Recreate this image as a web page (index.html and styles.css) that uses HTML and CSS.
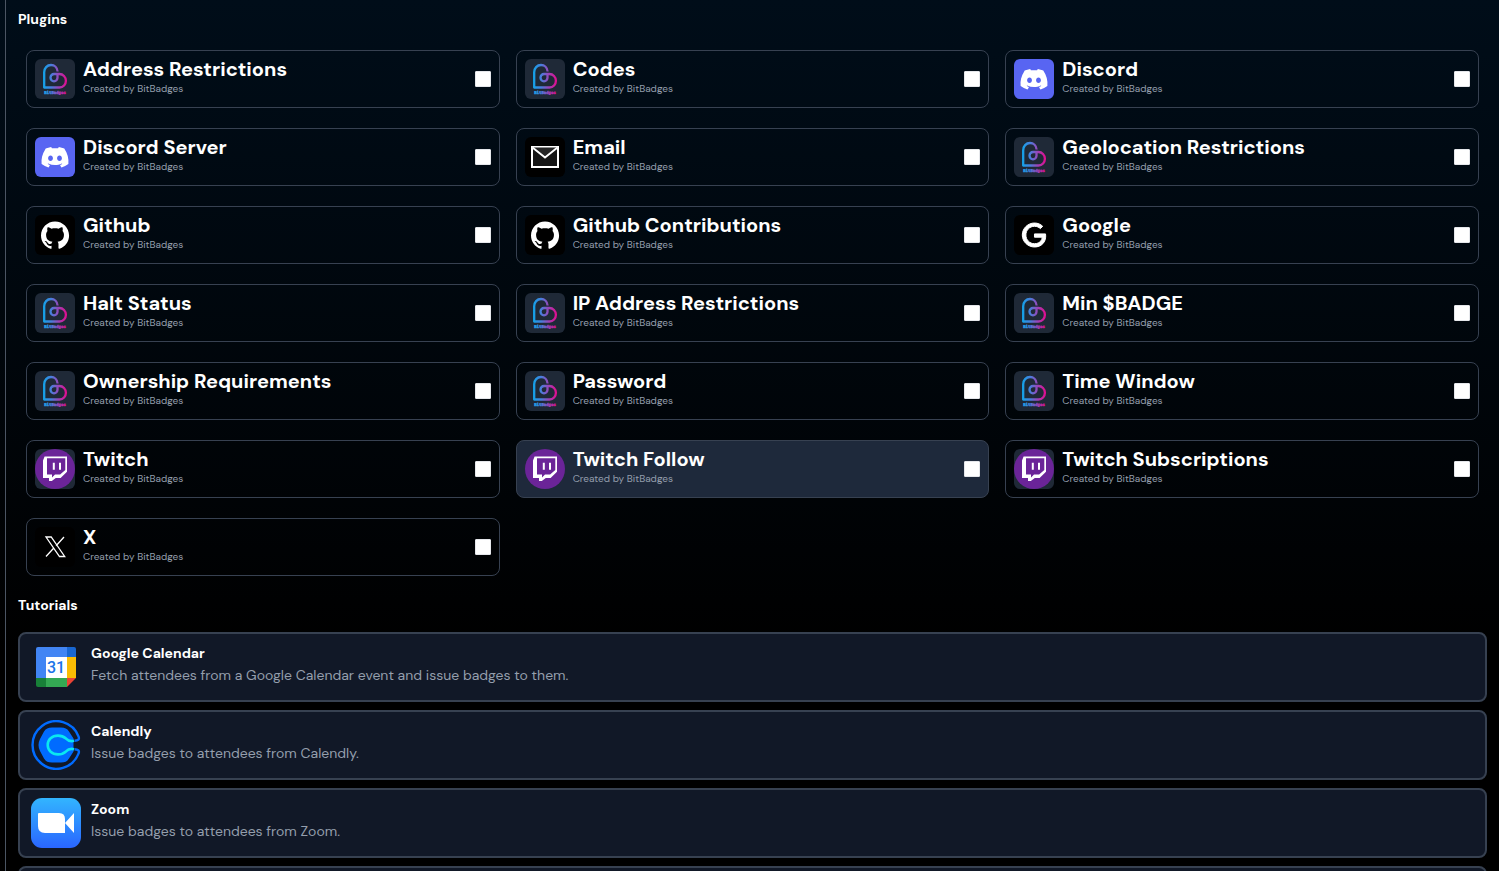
FILE: index.html
```html
<!DOCTYPE html>
<html lang="en">
<head>
<meta charset="utf-8">
<title>Plugins</title>
<link rel="stylesheet" href="styles.css">
</head>
<body>
<svg class="defs" aria-hidden="true">
  <defs>
    <linearGradient id="bb" gradientUnits="userSpaceOnUse" x1="8" y1="0" x2="32" y2="0">
      <stop offset="0" stop-color="#10a5ea"/><stop offset=".35" stop-color="#4a7ddb"/><stop offset=".65" stop-color="#9a44b8"/><stop offset="1" stop-color="#e6098d"/>
    </linearGradient>
    <linearGradient id="zoom-bg" x1="0" y1="0" x2="0" y2="1">
      <stop offset="0" stop-color="#32b5ff"/><stop offset="1" stop-color="#2a66ff"/>
    </linearGradient>
    <symbol id="bitbadges" viewBox="0 0 40 40">
      <path d="M22.600 12.500C22.300 8.700 19.600 6 16 6c-3.900 0-6.800 3.200-6.800 7.200v15.300h15.300c3.700 0 6.400-3.100 6.400-6.800s-2.900-6.700-6.400-6.700h-5.500c-2 0-3.500 1.700-3.500 3.700s1.500 3.600 3.500 3.600 3.500-1.600 3.500-3.600V15" fill="none" stroke="url(#bb)" stroke-width="2.300" stroke-linejoin="round"/>
      <text x="20" y="34.500" text-anchor="middle" class="bb-word" fill="url(#bb)" stroke="url(#bb)" stroke-width=".4">BitBadges</text>
    </symbol>
    <symbol id="discord" viewBox="0 0 40 40">
      <g transform="translate(6.500 6.700) scale(1.125)"><path fill="#fff" d="M20.317 4.370a19.791 19.791 0 0 0-4.885-1.515.074.074 0 0 0-.079.037c-.21.375-.444.864-.608 1.250a18.270 18.270 0 0 0-5.487 0 12.640 12.640 0 0 0-.617-1.250.077.077 0 0 0-.079-.037A19.736 19.736 0 0 0 3.677 4.370a.07.07 0 0 0-.032.027C.533 9.046-.32 13.580.099 18.057a.082.082 0 0 0 .031.057 19.900 19.900 0 0 0 5.993 3.030.078.078 0 0 0 .084-.028 14.090 14.090 0 0 0 1.226-1.994.076.076 0 0 0-.041-.106 13.107 13.107 0 0 1-1.872-.892.077.077 0 0 1-.008-.128 10.200 10.200 0 0 0 .372-.292.074.074 0 0 1 .077-.01c3.928 1.793 8.180 1.793 12.062 0a.074.074 0 0 1 .078.010c.12.098.246.198.373.292a.077.077 0 0 1-.006.127 12.299 12.299 0 0 1-1.873.892.077.077 0 0 0-.041.107c.36.698.772 1.362 1.225 1.993a.076.076 0 0 0 .084.028 19.839 19.839 0 0 0 6.002-3.030.077.077 0 0 0 .032-.054c.5-5.177-.838-9.674-3.549-13.660a.061.061 0 0 0-.031-.030zM8.020 15.330c-1.183 0-2.157-1.085-2.157-2.419 0-1.333.956-2.419 2.157-2.419 1.210 0 2.176 1.096 2.157 2.420 0 1.333-.956 2.418-2.157 2.418zm7.975 0c-1.183 0-2.157-1.085-2.157-2.419 0-1.333.955-2.419 2.157-2.419 1.210 0 2.176 1.096 2.157 2.420 0 1.333-.946 2.418-2.157 2.418z"/></g>
    </symbol>
    <symbol id="email" viewBox="0 0 40 40">
      <rect x="7" y="10" width="26" height="20" fill="#151515" stroke="#fff" stroke-width="2"/>
      <path d="M7.500 10.500 20 20.500 32.500 10.500" fill="#252525" stroke="#fff" stroke-width="2"/>
    </symbol>
    <symbol id="github" viewBox="0 0 40 40">
      <g transform="translate(6 6.100) scale(1.170)"><path fill="#fff" d="M12 .297c-6.630 0-12 5.373-12 12 0 5.303 3.438 9.800 8.205 11.385.6.113.82-.258.82-.577 0-.285-.01-1.040-.015-2.040-3.338.724-4.042-1.610-4.042-1.610C4.422 18.070 3.633 17.700 3.633 17.700c-1.087-.744.084-.729.084-.729 1.205.084 1.838 1.236 1.838 1.236 1.070 1.835 2.809 1.305 3.495.998.108-.776.417-1.305.76-1.605-2.665-.3-5.466-1.332-5.466-5.930 0-1.310.465-2.380 1.235-3.220-.135-.303-.54-1.523.105-3.176 0 0 1.005-.322 3.300 1.230.96-.267 1.980-.399 3-.405 1.020.006 2.040.138 3 .405 2.280-1.552 3.285-1.230 3.285-1.230.645 1.653.24 2.873.12 3.176.765.840 1.230 1.910 1.230 3.220 0 4.610-2.805 5.625-5.475 5.920.42.360.81 1.096.81 2.220 0 1.606-.015 2.896-.015 3.286 0 .315.210.69.825.57C20.565 22.092 24 17.592 24 12.297c0-6.627-5.373-12-12-12"/></g>
    </symbol>
    <symbol id="google" viewBox="0 0 40 40">
      <g transform="translate(8 8)"><path fill="#fff" d="M12.480 10.920v3.280h7.840c-.24 1.840-.853 3.187-1.787 4.133-1.147 1.147-2.933 2.400-6.053 2.400-4.827 0-8.600-3.893-8.600-8.720s3.773-8.720 8.600-8.720c2.600 0 4.507 1.027 5.907 2.347l2.307-2.307C18.747 1.440 16.133 0 12.480 0 5.867 0 .307 5.387.307 12s5.560 12 12.173 12c3.573 0 6.267-1.173 8.373-3.360 2.160-2.160 2.840-5.213 2.840-7.667 0-.76-.053-1.467-.173-2.053H12.480z" stroke="#fff" stroke-width="1"/></g>
    </symbol>
    <symbol id="twitch" viewBox="0 0 40 40">
      <circle cx="20" cy="20" r="20" fill="#6b2498"/>
      <path fill="#fff" fill-rule="evenodd" d="M9.600 7.500H32v15.200l-6.400 6.300h-4.800L16.800 32H14v-3H8V11.500zM12 9.300v16.200h5v3l3-3h5.100l5.200-4.600V9.300zM17.800 13.800h2v6.900h-2zM24 13.800h2v6.900h-2z"/>
    </symbol>
    <symbol id="x" viewBox="0 0 40 40">
      <path d="M11 10h5.200l13.500 19.500h-5.200zM29 10l-7.900 8.800M18.800 21 11 29.500" fill="none" stroke="#fff" stroke-width="1.300"/>
    </symbol>
  </defs>
</svg>
<main class="panel">
  <h2 class="heading">Plugins</h2>
  <div class="plugins">
    <label class="plugin"><svg class="logo"><use href="#bitbadges"/></svg><span class="info"><span class="name">Address Restrictions</span><span class="by">Created by BitBadges</span></span><input class="check" type="checkbox"></label>
    <label class="plugin"><svg class="logo"><use href="#bitbadges"/></svg><span class="info"><span class="name">Codes</span><span class="by">Created by BitBadges</span></span><input class="check" type="checkbox"></label>
    <label class="plugin"><svg class="logo blurple"><use href="#discord"/></svg><span class="info"><span class="name">Discord</span><span class="by">Created by BitBadges</span></span><input class="check" type="checkbox"></label>
    <label class="plugin"><svg class="logo blurple"><use href="#discord"/></svg><span class="info"><span class="name">Discord Server</span><span class="by">Created by BitBadges</span></span><input class="check" type="checkbox"></label>
    <label class="plugin"><svg class="logo black"><use href="#email"/></svg><span class="info"><span class="name">Email</span><span class="by">Created by BitBadges</span></span><input class="check" type="checkbox"></label>
    <label class="plugin"><svg class="logo"><use href="#bitbadges"/></svg><span class="info"><span class="name">Geolocation Restrictions</span><span class="by">Created by BitBadges</span></span><input class="check" type="checkbox"></label>
    <label class="plugin"><svg class="logo black"><use href="#github"/></svg><span class="info"><span class="name">Github</span><span class="by">Created by BitBadges</span></span><input class="check" type="checkbox"></label>
    <label class="plugin"><svg class="logo black"><use href="#github"/></svg><span class="info"><span class="name">Github Contributions</span><span class="by">Created by BitBadges</span></span><input class="check" type="checkbox"></label>
    <label class="plugin"><svg class="logo black"><use href="#google"/></svg><span class="info"><span class="name">Google</span><span class="by">Created by BitBadges</span></span><input class="check" type="checkbox"></label>
    <label class="plugin"><svg class="logo"><use href="#bitbadges"/></svg><span class="info"><span class="name">Halt Status</span><span class="by">Created by BitBadges</span></span><input class="check" type="checkbox"></label>
    <label class="plugin"><svg class="logo"><use href="#bitbadges"/></svg><span class="info"><span class="name">IP Address Restrictions</span><span class="by">Created by BitBadges</span></span><input class="check" type="checkbox"></label>
    <label class="plugin"><svg class="logo"><use href="#bitbadges"/></svg><span class="info"><span class="name">Min $BADGE</span><span class="by">Created by BitBadges</span></span><input class="check" type="checkbox"></label>
    <label class="plugin"><svg class="logo"><use href="#bitbadges"/></svg><span class="info"><span class="name">Ownership Requirements</span><span class="by">Created by BitBadges</span></span><input class="check" type="checkbox"></label>
    <label class="plugin"><svg class="logo"><use href="#bitbadges"/></svg><span class="info"><span class="name">Password</span><span class="by">Created by BitBadges</span></span><input class="check" type="checkbox"></label>
    <label class="plugin"><svg class="logo"><use href="#bitbadges"/></svg><span class="info"><span class="name">Time Window</span><span class="by">Created by BitBadges</span></span><input class="check" type="checkbox"></label>
    <label class="plugin"><svg class="logo"><use href="#twitch"/></svg><span class="info"><span class="name">Twitch</span><span class="by">Created by BitBadges</span></span><input class="check" type="checkbox"></label>
    <label class="plugin active"><svg class="logo"><use href="#twitch"/></svg><span class="info"><span class="name">Twitch Follow</span><span class="by">Created by BitBadges</span></span><input class="check" type="checkbox"></label>
    <label class="plugin"><svg class="logo"><use href="#twitch"/></svg><span class="info"><span class="name">Twitch Subscriptions</span><span class="by">Created by BitBadges</span></span><input class="check" type="checkbox"></label>
    <label class="plugin"><svg class="logo black"><use href="#x"/></svg><span class="info"><span class="name">X</span><span class="by">Created by BitBadges</span></span><input class="check" type="checkbox"></label>
  </div>
  <h2 class="heading">Tutorials</h2>
  <div class="tutorials">
    <article class="tutorial">
      <svg class="picture" viewBox="0 0 50 50" aria-hidden="true">
        <path d="M7 5h29v10H15v21H5V7a2 2 0 0 1 2-2z" fill="#4285f4"/>
        <path d="M36 5h7a2 2 0 0 1 2 2v8h-9z" fill="#1967d2"/>
        <path d="M36 15h9v21h-9z" fill="#fbbc04"/>
        <path d="M15 36h21v9H15z" fill="#34a853"/>
        <path d="M5 36h10v9H7a2 2 0 0 1-2-2z" fill="#188038"/>
        <path d="M36 36h9l-9 9z" fill="#ea4335"/>
        <path d="M15 15h21v21H15z" fill="#fff"/>
        <text x="25" y="31" text-anchor="middle" class="day">31</text>
      </svg>
      <div><h3 class="title">Google Calendar</h3><p class="text">Fetch attendees from a Google Calendar event and issue badges to them.</p></div>
    </article>
    <article class="tutorial">
      <svg class="picture" viewBox="0 0 50 50" aria-hidden="true">
        <path d="M21 7.600h9c4 0 6 1 8 4l4.500 7v13l-4.500 7c-2 3-4 4-8 4h-9c-4 0-6-1-8-4l-4-7.500c-2-4-2-8 0-12l4-7.500c2-3 4-4 8-4z" fill="#006bff"/>
        <path d="M43 20h7v10h-7z" fill="#111827"/>
        <path d="M43.500 20.800c3.800-.2 5.100-1.500 4.100-4.200A23.800 23.800 0 1 0 47.600 33.400c1-2.700-.3-4-4.100-4.200" fill="none" stroke="#006bff" stroke-width="2.400"/>
        <path d="M43 20.800c-4 .9-5.700.3-8-2.200-2.300-2-4.300-3-8-3-6 0-10.300 4-10.300 9.400S21 34.400 27 34.400c3.700 0 5.700-1 8-3 2.300-2.500 4-3.100 8-2.200" fill="none" stroke="#0ae8f0" stroke-width="2.600"/>
      </svg>
      <div><h3 class="title">Calendly</h3><p class="text">Issue badges to attendees from Calendly.</p></div>
    </article>
    <article class="tutorial">
      <svg class="picture" viewBox="0 0 50 50" aria-hidden="true">
        <rect width="50" height="50" rx="11" fill="url(#zoom-bg)"/>
        <path d="M8 15h20q6 0 6 6v14H14q-7 0-7-7V16q0-1 1-1zM34 25l9-10v20z" fill="#fff"/>
      </svg>
      <div><h3 class="title">Zoom</h3><p class="text">Issue badges to attendees from Zoom.</p></div>
    </article>
    <article class="tutorial"></article>
  </div>
</main>
</body>
</html>
```

FILE: styles.css
```css
* { box-sizing: border-box; }

body {
  margin: 0;
  height: 100vh;
  overflow: hidden;
  padding-left: 5px;
  background: linear-gradient(#000d19, #000 75%);
  color: #fff;
  font-family: "DM Sans", Inter, "Liberation Sans", sans-serif;
  font-size: 14px;
}

.defs { position: absolute; width: 0; height: 0; }

.panel {
  min-height: 100%;
  padding: 8px 12px;
  border-left: 1px solid #4b5563;
}

.heading {
  margin: 0;
  font-size: 14px;
  line-height: 22px;
  font-weight: 700;
}

.plugins {
  display: grid;
  grid-template-columns: repeat(3, 1fr);
  gap: 20px 16px;
  padding: 20px 8px 18px;
}

.plugin {
  display: flex;
  align-items: center;
  gap: 8px;
  padding: 8px;
  border: 1px solid #374151;
  border-radius: 8px;
  cursor: pointer;
}

.active { background: #1e293b; }

.logo {
  flex: none;
  width: 40px;
  height: 40px;
  border-radius: 6px;
  background: #1f2937;
}

.active .logo { background: none; }
.blurple { background: #5865f2; }
.black { background: #000; }

.bb-word { font-family: "DejaVu Sans Mono", monospace; font-size: 4px; font-weight: 700; }

.info { flex: 1; align-self: flex-start; }
.name, .by { display: block; }
.name { font-size: 20px; line-height: 20px; font-weight: 700; }
.by { font-size: 10px; line-height: 20px; color: #949eac; }

.check {
  appearance: none;
  width: 16px;
  height: 16px;
  margin: 0;
  border: 1px solid #e5e7eb;
  border-radius: 1px;
  background: #fff;
}

.check:checked { background: #1890ff; }

.tutorials {
  display: grid;
  gap: 8px;
  padding-top: 16px;
}

.tutorial {
  display: flex;
  gap: 10px;
  min-height: 70px;
  padding: 8px 11px;
  border: 2px solid #374151;
  border-radius: 8px;
  background: #111827;
}

.picture { flex: none; width: 50px; height: 50px; }
.day { font-family: Roboto, sans-serif; font-size: 16px; font-weight: 500; fill: #1a73e8; }

.title, .text { margin: 0; font-size: 14px; line-height: 22px; }
.title { font-weight: 700; }
.text { color: #949eac; }
```
